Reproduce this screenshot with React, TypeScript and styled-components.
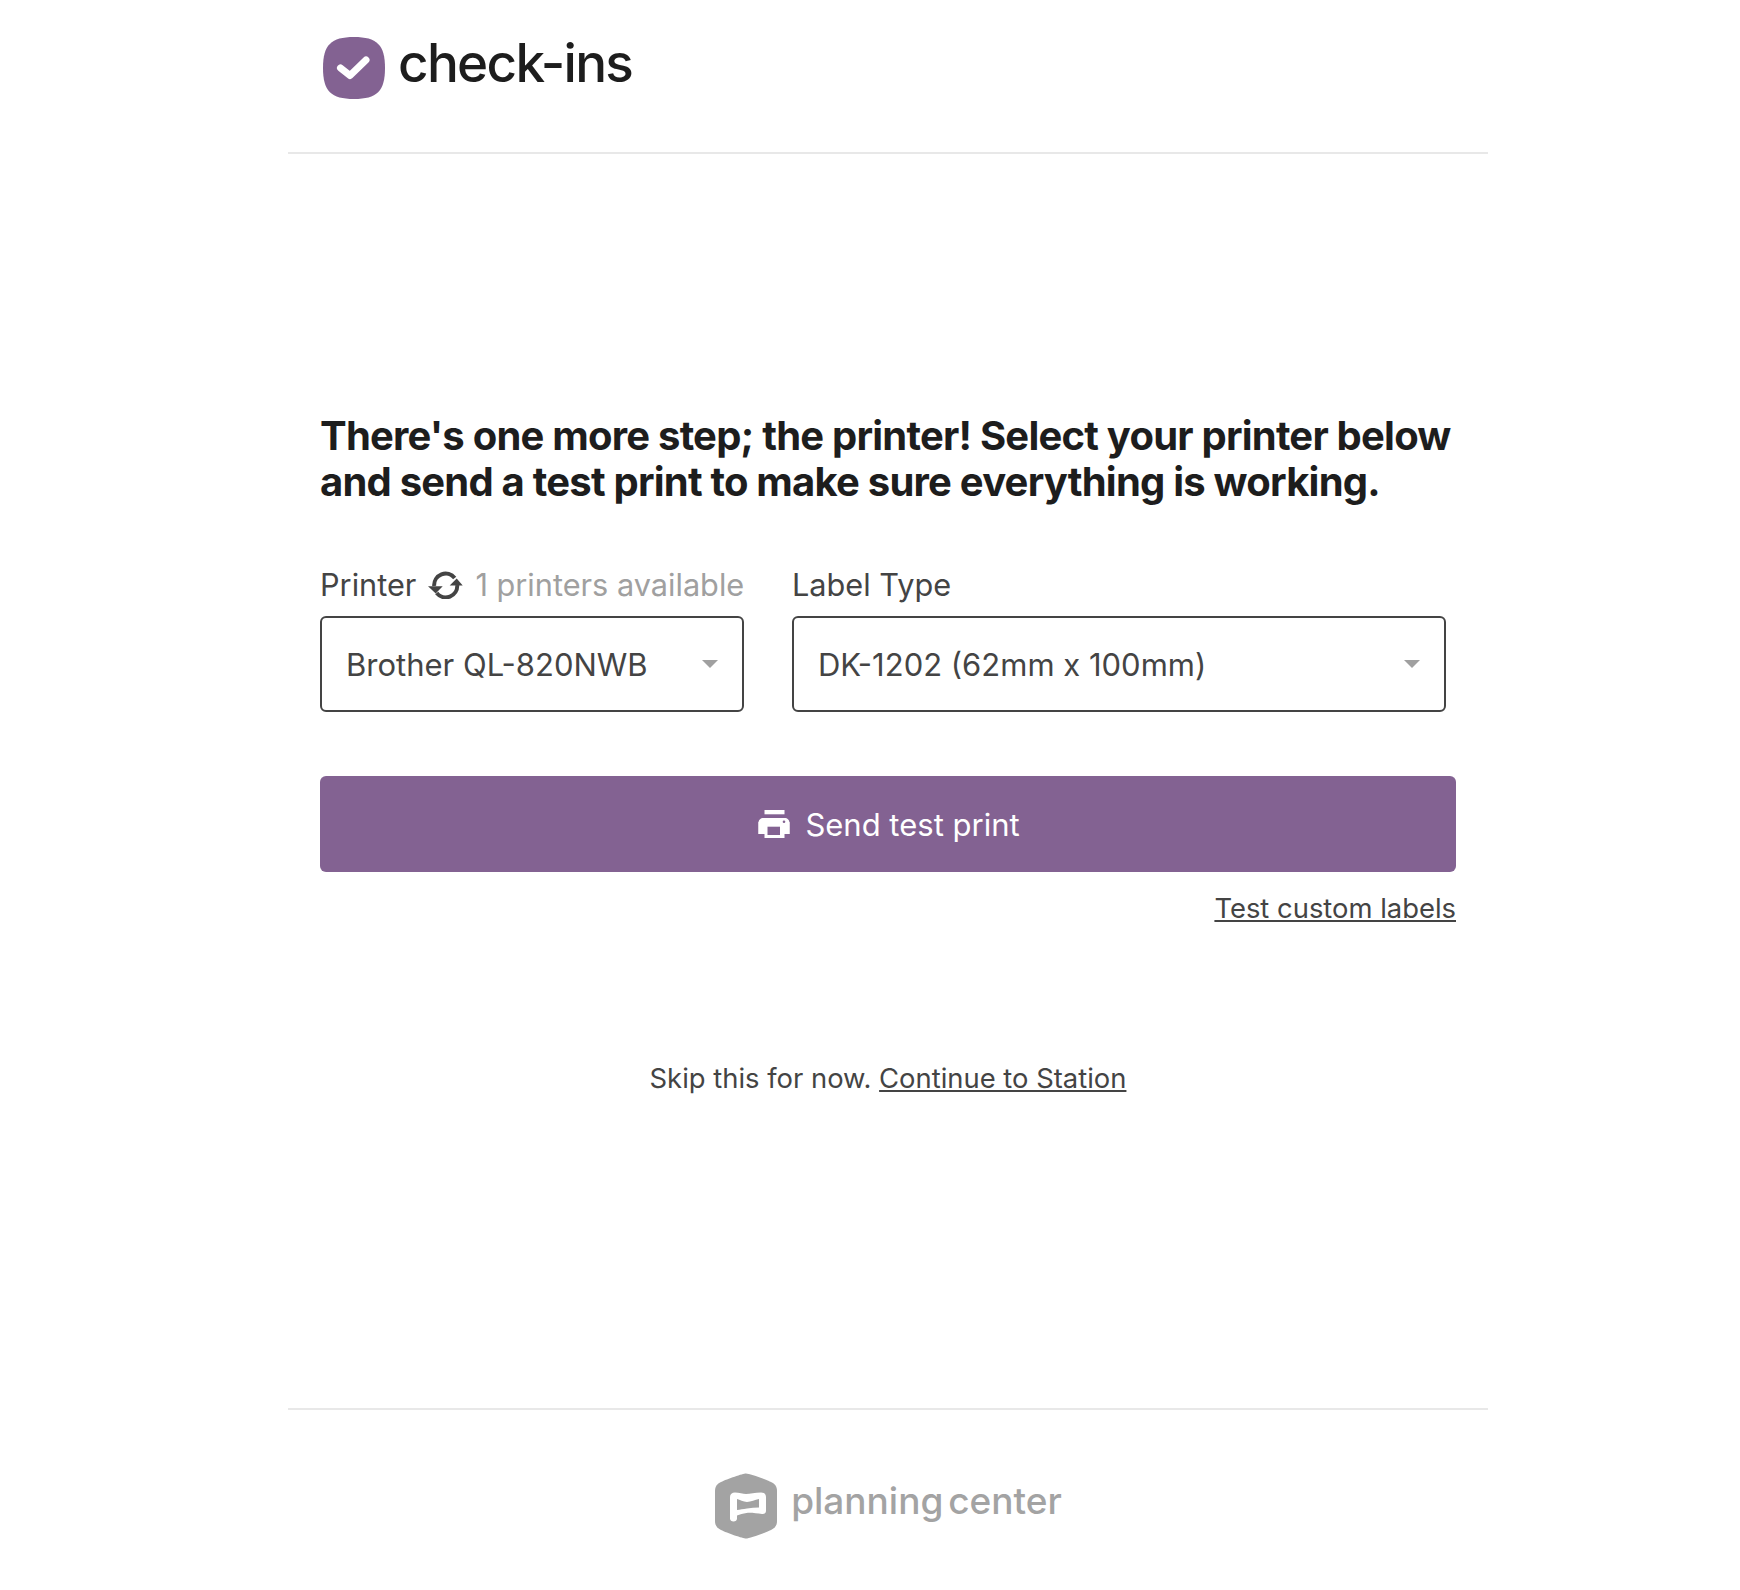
import React from 'react'
import styled, { createGlobalStyle } from 'styled-components'

const PURPLE = '#836292'

const Global = createGlobalStyle`
  html, body {
    margin: 0;
    padding: 0;
    background: #fff;
  }
`

const CheckInsMark = () => (
  <svg width="62" height="62" viewBox="0 0 62 62">
    <path d="M31 0C54 0 62 8 62 31C62 54 54 62 31 62C8 62 0 54 0 31C0 8 8 0 31 0Z" fill={PURPLE} />
    <path d="M17.500 31L27 38.500L43 23" fill="none" stroke="#fff" strokeWidth="7" strokeLinecap="round" strokeLinejoin="round" />
  </svg>
)

const PlanningCenterMark = () => (
  <svg width="64" height="66" viewBox="0 0 62 66">
    <path
      d="M31 0.500C34 0.500 50 6 56 9C60 11 62 13.500 62 18V48C62 52.500 60 55 56 57C50 60 34 65.500 31 65.500C28 65.500 12 60 6 57C2 55 0 52.500 0 48V18C0 13.500 2 11 6 9C12 6 28 0.500 31 0.500Z"
      fill="#a3a3a3"
    />
    <path
      d="M15 24C15 21 17 19.500 20 19.500C24 19.500 28 21 31 21C35 21 40 19.500 46 19.500C49 19.500 51 21 51 24V38C51 40 49 41.500 47 41C42 40.500 36 39.500 31.500 40C28 40.500 25 41.500 22 42.500V45.500C22 47.500 20.500 48.500 18.500 48.500C16.500 48.500 15 47.500 15 45.500Z"
      fill="#fff"
    />
    <path d="M22 26C25 26.500 28 29 32 29C36 29 40 26.500 44 26V34.500C40 34.500 36 35 32 35.500C28 36 25 36.500 22 37Z" fill="#a3a3a3" />
  </svg>
)

const RefreshIcon = () => (
  <SyncSvg viewBox="0 0 35 28">
    <path d="M6.200 15A11.500 11.500 0 0 1 26.700 7" fill="none" stroke="currentColor" strokeWidth="4" />
    <path d="M0 15.300H14.700L7.700 22.500Z" fill="currentColor" />
    <path d="M29.200 14A11.500 11.500 0 0 1 8.700 22" fill="none" stroke="currentColor" strokeWidth="4" />
    <path d="M21.700 14.500H34.700L28.700 7.500Z" fill="currentColor" />
  </SyncSvg>
)

const PrintIcon = () => (
  <svg width="32" height="28" viewBox="0 0 31 28">
    <rect x="6" y="0" width="20" height="4.300" fill="#fff" />
    <path d="M5 8H26C29 8 31 10 31 13V24H26V13H6V24H0V13C0 10 2 8 5 8Z" fill="#fff" />
    <rect x="0" y="12" width="31" height="12" fill="#fff" />
    <rect x="6" y="13" width="20" height="15" fill="#fff" />
    <rect x="9" y="16.700" width="12.500" height="8.300" fill={PURPLE} />
    <circle cx="25.500" cy="11.700" r="1.300" fill={PURPLE} />
  </svg>
)

const App: React.FC = () => (
  <Page>
    <Global />
    <Header>
      <CheckInsMark />
      <AppName>check-ins</AppName>
    </Header>

    <Main>
      <Heading>
        There's one more step; the printer! Select your printer below
        <br />
        and send a test print to make sure everything is working.
      </Heading>

      <Fields>
        <PrinterField>
          <LabelRow>
            <span>Printer</span>
            <RefreshIcon />
            <Muted>1 printers available</Muted>
          </LabelRow>
          <Select>
            <span>Brother QL-820NWB</span>
            <Caret />
          </Select>
        </PrinterField>
        <LabelField>
          <LabelRow>
            <span>Label Type</span>
          </LabelRow>
          <Select>
            <span>DK-1202 (62mm x 100mm)</span>
            <Caret />
          </Select>
        </LabelField>
      </Fields>

      <SendButton>
        <PrintIcon />
        Send test print
      </SendButton>

      <CustomRow>
        <TextLink href="#">Test custom labels</TextLink>
      </CustomRow>

      <SkipRow>
        Skip this for now. <TextLink href="#">Continue to Station</TextLink>
      </SkipRow>
    </Main>

    <Footer>
      <PlanningCenterMark />
      <BrandName>planning center</BrandName>
    </Footer>
  </Page>
)

export default App

const Page = styled.div`
  width: 1200px;
  min-height: 1590px;
  margin-left: 288px;
  display: flex;
  flex-direction: column;
  font-family: Inter, 'Liberation Sans', sans-serif;
  color: #444;
`

const Header = styled.header`
  height: 152px;
  box-sizing: content-box;
  border-bottom: 2px solid #e8e8e8;
  padding: 0 0 0 35px;
  display: flex;
  align-items: flex-start;
  gap: 13px;

  svg {
    margin-top: 37px;
  }
`

const AppName = styled.div`
  margin-top: 32px;
  font-size: 53px;
  font-weight: 500;
  letter-spacing: -1.7px;
  color: #1d1d1d;
  line-height: 62px;
`

const Main = styled.main`
  flex: 1;
  padding: 259px 32px 0 32px;
  display: flex;
  flex-direction: column;
`

const Heading = styled.h1`
  margin: 0;
  font-size: 40px;
  line-height: 46px;
  font-weight: 700;
  letter-spacing: -0.78px;
  color: #1d1d1d;
  white-space: nowrap;
`

const Fields = styled.div`
  margin-top: 60px;
  display: flex;
  gap: 48px;
`

const PrinterField = styled.div`
  width: 424px;
`

const LabelField = styled.div`
  width: 654px;
`

const LabelRow = styled.div`
  height: 40px;
  margin-bottom: 11px;
  display: flex;
  align-items: center;
  gap: 12px;
  font-size: 30.7px;
  line-height: 40px;
  white-space: nowrap;
`

const Muted = styled.span`
  color: #a0a0a0;
`

const SyncSvg = styled.svg`
  width: 35px;
  height: 28px;
  color: #444;
  flex: none;
`

const Select = styled.div`
  height: 96px;
  box-sizing: border-box;
  border: 2px solid #444;
  border-radius: 6px;
  padding: 0 24px;
  display: flex;
  align-items: center;
  justify-content: space-between;
  font-size: 31px;
`

const Caret = styled.span`
  width: 0;
  height: 0;
  border-left: 8px solid transparent;
  border-right: 8px solid transparent;
  border-top: 8px solid #a0a0a0;
`

const SendButton = styled.button`
  margin-top: 64px;
  height: 96px;
  border: 0;
  border-radius: 6px;
  padding: 0 0 0 2px;
  background: ${PURPLE};
  color: #fff;
  font-family: inherit;
  font-size: 31px;
  display: flex;
  align-items: center;
  justify-content: center;
  gap: 15px;
`

const CustomRow = styled.div`
  margin-top: 19px;
  display: flex;
  justify-content: flex-end;
  font-size: 27.4px;
  line-height: 34px;
`

const TextLink = styled.a`
  color: #444;
  text-decoration: underline;
`

const SkipRow = styled.div`
  margin-top: 136px;
  text-align: center;
  font-size: 27.4px;
  line-height: 34px;
`

const Footer = styled.footer`
  height: 182px;
  border-top: 2px solid #e8e8e8;
  display: flex;
  align-items: center;
  justify-content: center;
  gap: 13px;
  padding-top: 12px;
  box-sizing: border-box;
`

const BrandName = styled.div`
  font-size: 37px;
  font-weight: 500;
  color: #a3a3a3;
  line-height: 1;
  word-spacing: -5px;
  margin-top: -12px;
`
